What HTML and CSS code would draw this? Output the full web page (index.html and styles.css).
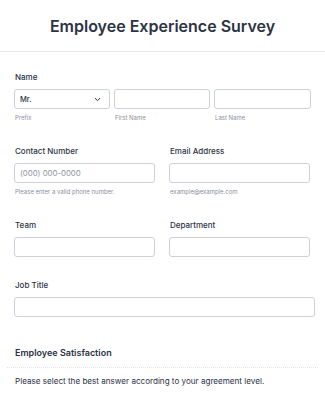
FILE: index.html
```html
<html lang="en">
  <head>
    <meta charset="UTF-8" />
    <meta name="viewport" content="width=device-width, initial-scale=1.0" />
    <title>Employee Experience Survey</title>
    <link rel="stylesheet" href="styles.css">
  </head>

  <body>
    <header class="form-header">
      <h1>Employee Experience Survey</h1>
    </header>

    <form class="survey">
      <div class="field">
        <label>Name</label>
        <div class="row three">
          <div>
            <div class="box select">
              <span>Mr.</span>
              <svg width="7" height="5" viewBox="0 0 7 5">
                <path d="M1 1.2 L3.5 3.6 L6 1.2" fill="none" stroke="#2c3345" stroke-width="1" />
              </svg>
            </div>
            <p class="sub">Prefix</p>
          </div>
          <div>
            <div class="box"></div>
            <p class="sub">First Name</p>
          </div>
          <div>
            <div class="box"></div>
            <p class="sub">Last Name</p>
          </div>
        </div>
      </div>

      <div class="row two">
        <div class="field">
          <label>Contact Number</label>
          <div class="box"><span class="placeholder">(000) 000-0000</span></div>
          <p class="sub">Please enter a valid phone number.</p>
        </div>
        <div class="field">
          <label>Email Address</label>
          <div class="box"></div>
          <p class="sub">example@example.com</p>
        </div>
      </div>

      <div class="row two">
        <div class="field">
          <label>Team</label>
          <div class="box"></div>
        </div>
        <div class="field">
          <label>Department</label>
          <div class="box"></div>
        </div>
      </div>

      <div class="field wide">
        <label>Job Title</label>
        <div class="box"></div>
      </div>
    </form>

    <section class="section">
      <h2>Employee Satisfaction</h2>
      <p>Please select the best answer according to your agreement level.</p>
    </section>
  </body>
</html>
```

FILE: styles.css
```css
body {
  margin: 0;
  background-color: #fff;
  font-family: Inter, "Noto Sans", sans-serif;
  color: #2c3345;
}

.form-header {
  height: 51px;
  display: flex;
  justify-content: center;
  align-items: center;
  border-bottom: 1px solid #e8e9ee;
}

.form-header h1 {
  margin: 0;
  font-size: 16px;
  font-weight: 600;
}

.survey {
  display: flex;
  flex-direction: column;
  gap: 22px;
  padding: 19px 10px 0 14px;
}

.field label {
  display: block;
  font-size: 8px;
  font-weight: 500;
  line-height: 12px;
  margin-bottom: 6px;
  padding-left: 1px;
}

.row {
  display: grid;
}

.row.three {
  grid-template-columns: 96px 96px 97px;
  column-gap: 4px;
}

.row.two {
  grid-template-columns: 141px 141px;
  column-gap: 14px;
}

.box {
  box-sizing: border-box;
  height: 20px;
  border: 1px solid #cdd1dc;
  border-radius: 3px;
  background-color: #fff;
  display: flex;
  align-items: center;
  padding: 0 5px;
  font-size: 7.8px;
}

.select {
  justify-content: space-between;
  font-weight: 500;
  font-size: 7.5px;
  padding-right: 8px;
}

.placeholder {
  color: #8f94a3;
}

.sub {
  margin: 4px 0 0;
  padding-left: 1px;
  font-size: 6px;
  line-height: 10px;
  color: #8a8f9e;
}

.section {
  margin-top: 29px;
  padding: 0 7px;
}

.section h2 {
  margin: 0;
  padding: 0 8px 7px;
  font-size: 9px;
  font-weight: 600;
  line-height: 14px;
  border-bottom: 1px dotted #e3e5ea;
}

.section p {
  margin: 7px 0 0;
  padding: 0 8px;
  font-size: 8.1px;
  line-height: 12px;
}
```
